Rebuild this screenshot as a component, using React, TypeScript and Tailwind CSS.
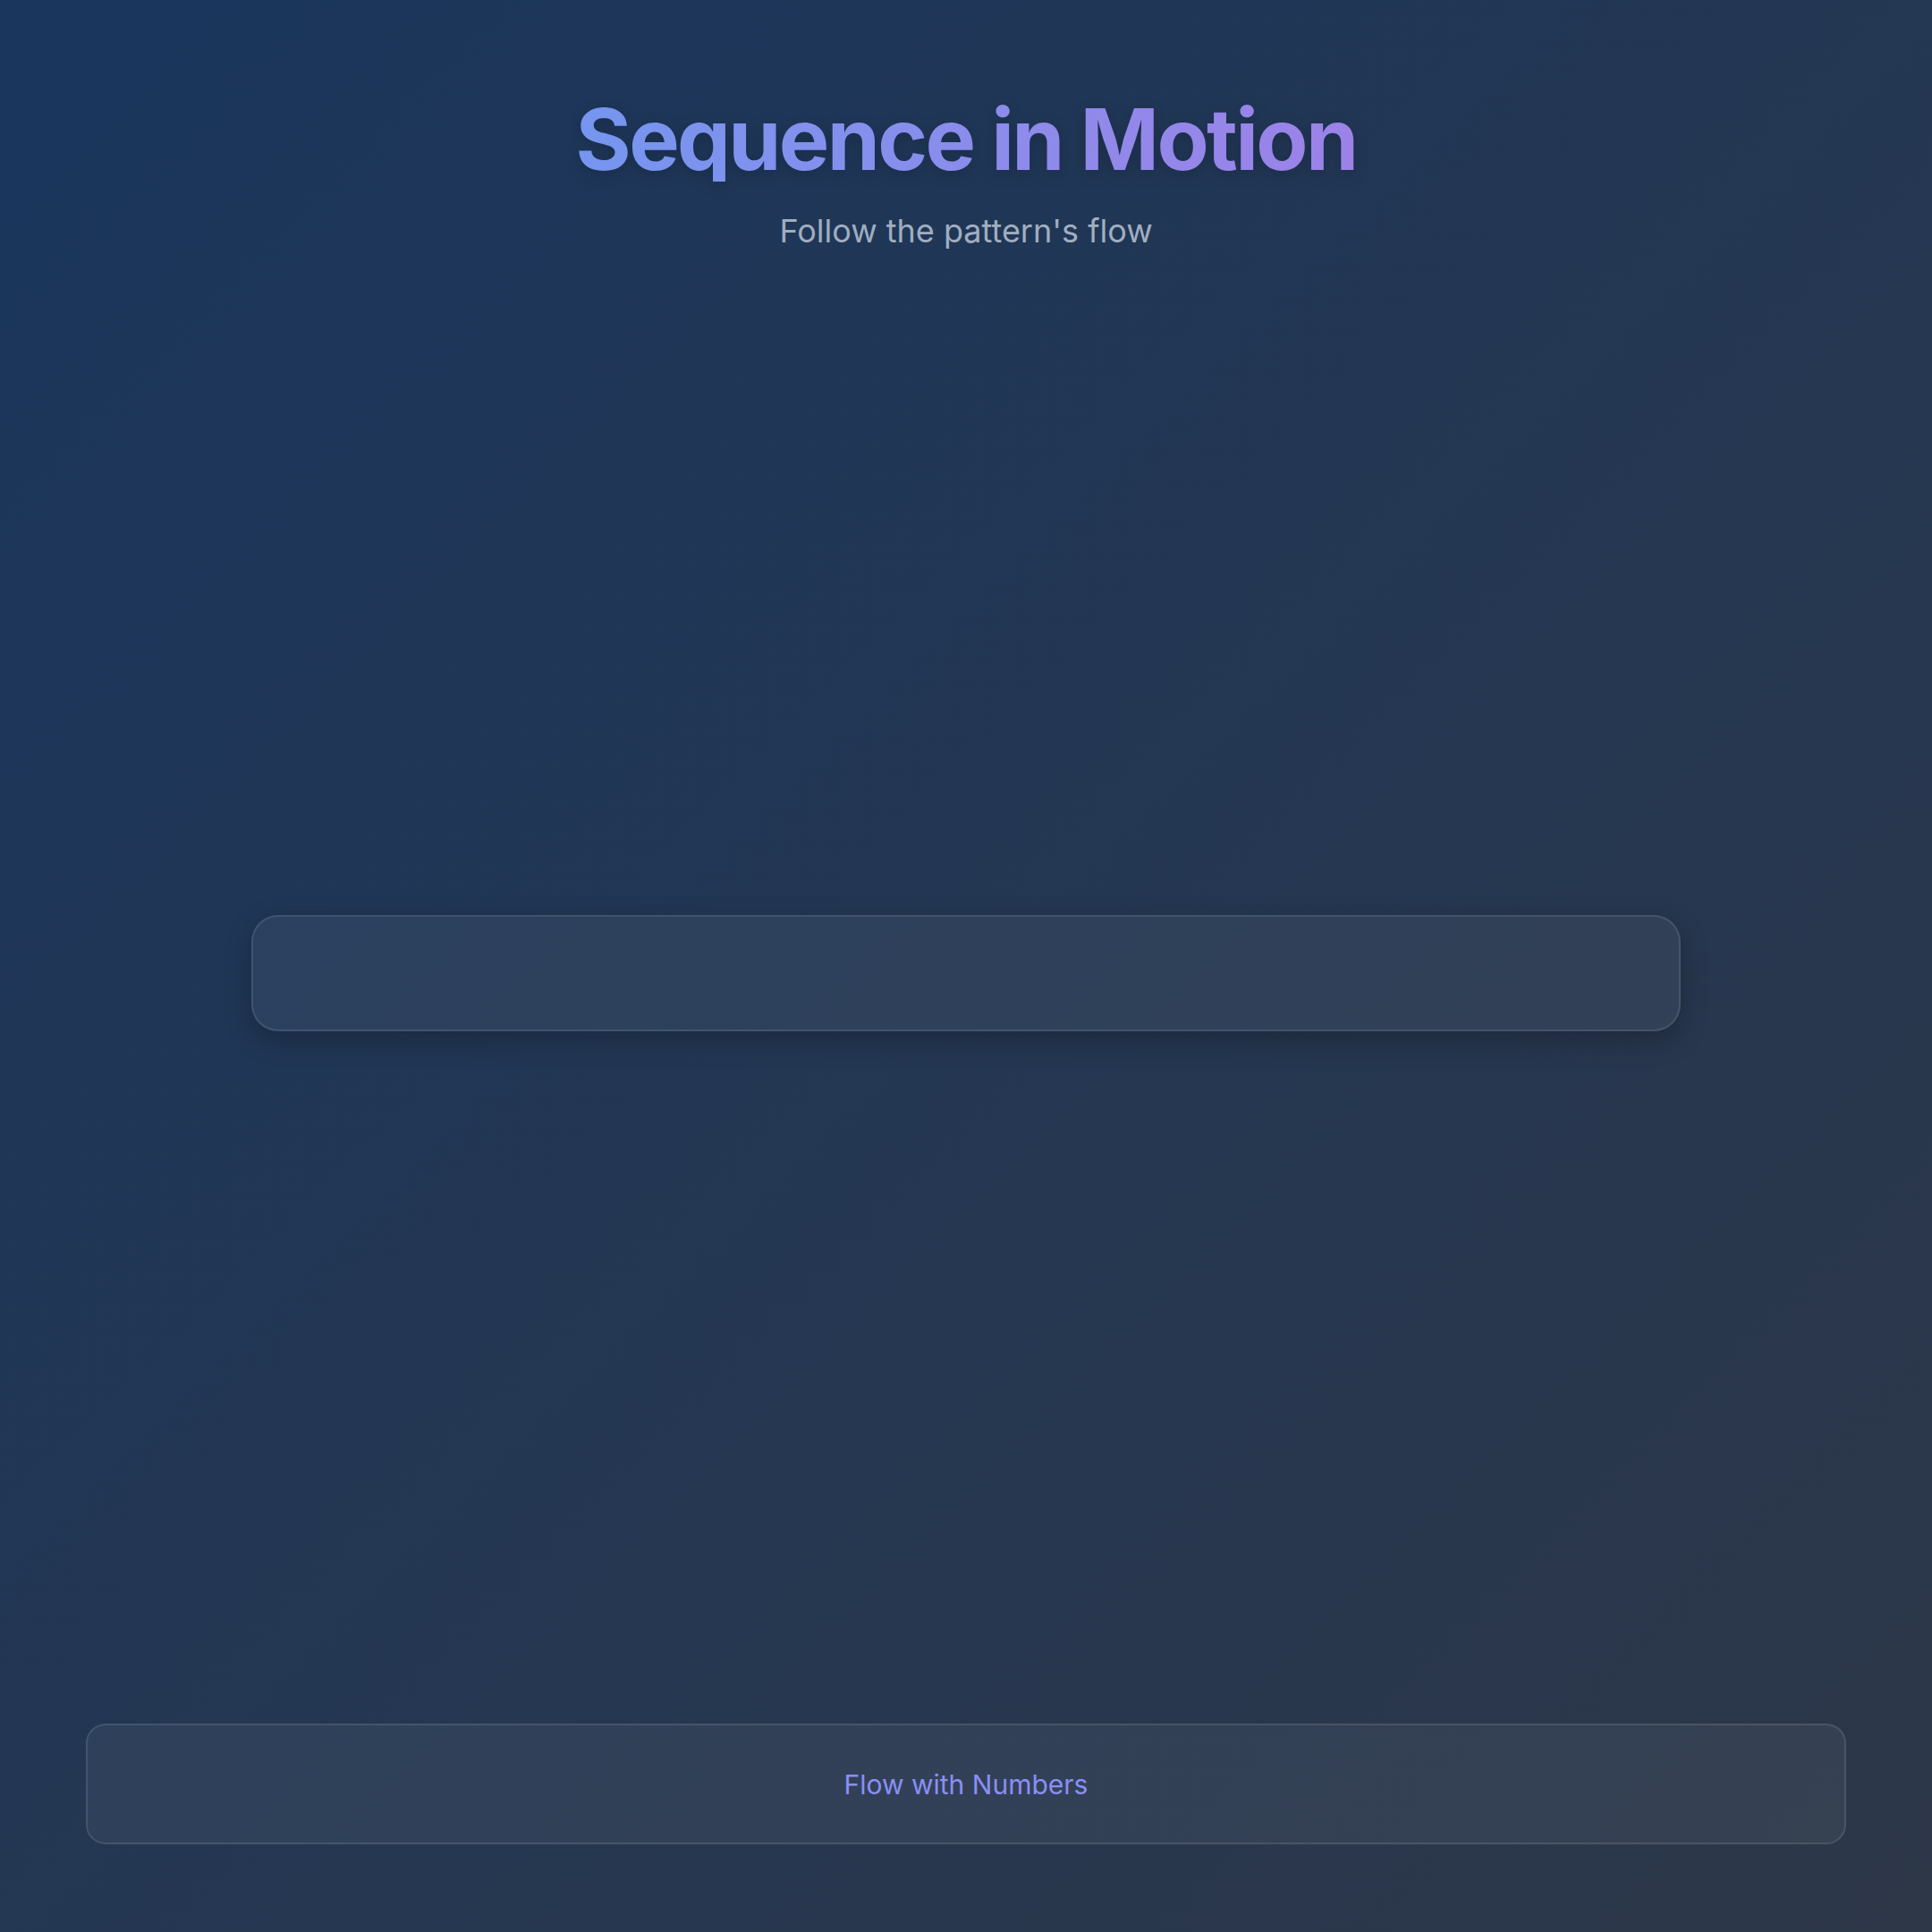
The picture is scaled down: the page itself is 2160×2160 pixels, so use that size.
export default function App() {
  return (
    <div className="min-h-screen flex flex-col px-24 pt-[108px] pb-[98px] bg-[linear-gradient(135deg,#1a365d_0%,#2d3748_100%)] font-['Inter','Liberation_Sans',sans-serif]">
      <header className="text-center">
        <h1 className="inline-block text-[95px] font-bold leading-none tracking-[-0.028em] bg-linear-to-r from-[#7596ef] to-[#9c82e8] bg-clip-text text-transparent drop-shadow-[0_4px_8px_rgba(0,0,0,0.18)]">
          Sequence in Motion
        </h1>
        <p className="mt-[35px] text-4xl leading-10 text-[#a0aec0]">Follow the pattern's flow</p>
      </header>

      <main className="flex-1 flex items-center justify-center">
        <div className="w-[1598px] h-[130px] -mt-[30px] rounded-[30px] border-2 border-white/10 bg-white/5 shadow-[0_10px_30px_rgba(0,0,0,0.25)]" />
      </main>

      <footer className="h-[135px] flex items-center justify-center rounded-[22px] border-2 border-white/10 bg-white/5">
        <span className="text-3xl text-[#8a8ff5]">Flow with Numbers</span>
      </footer>
    </div>
  );
}
